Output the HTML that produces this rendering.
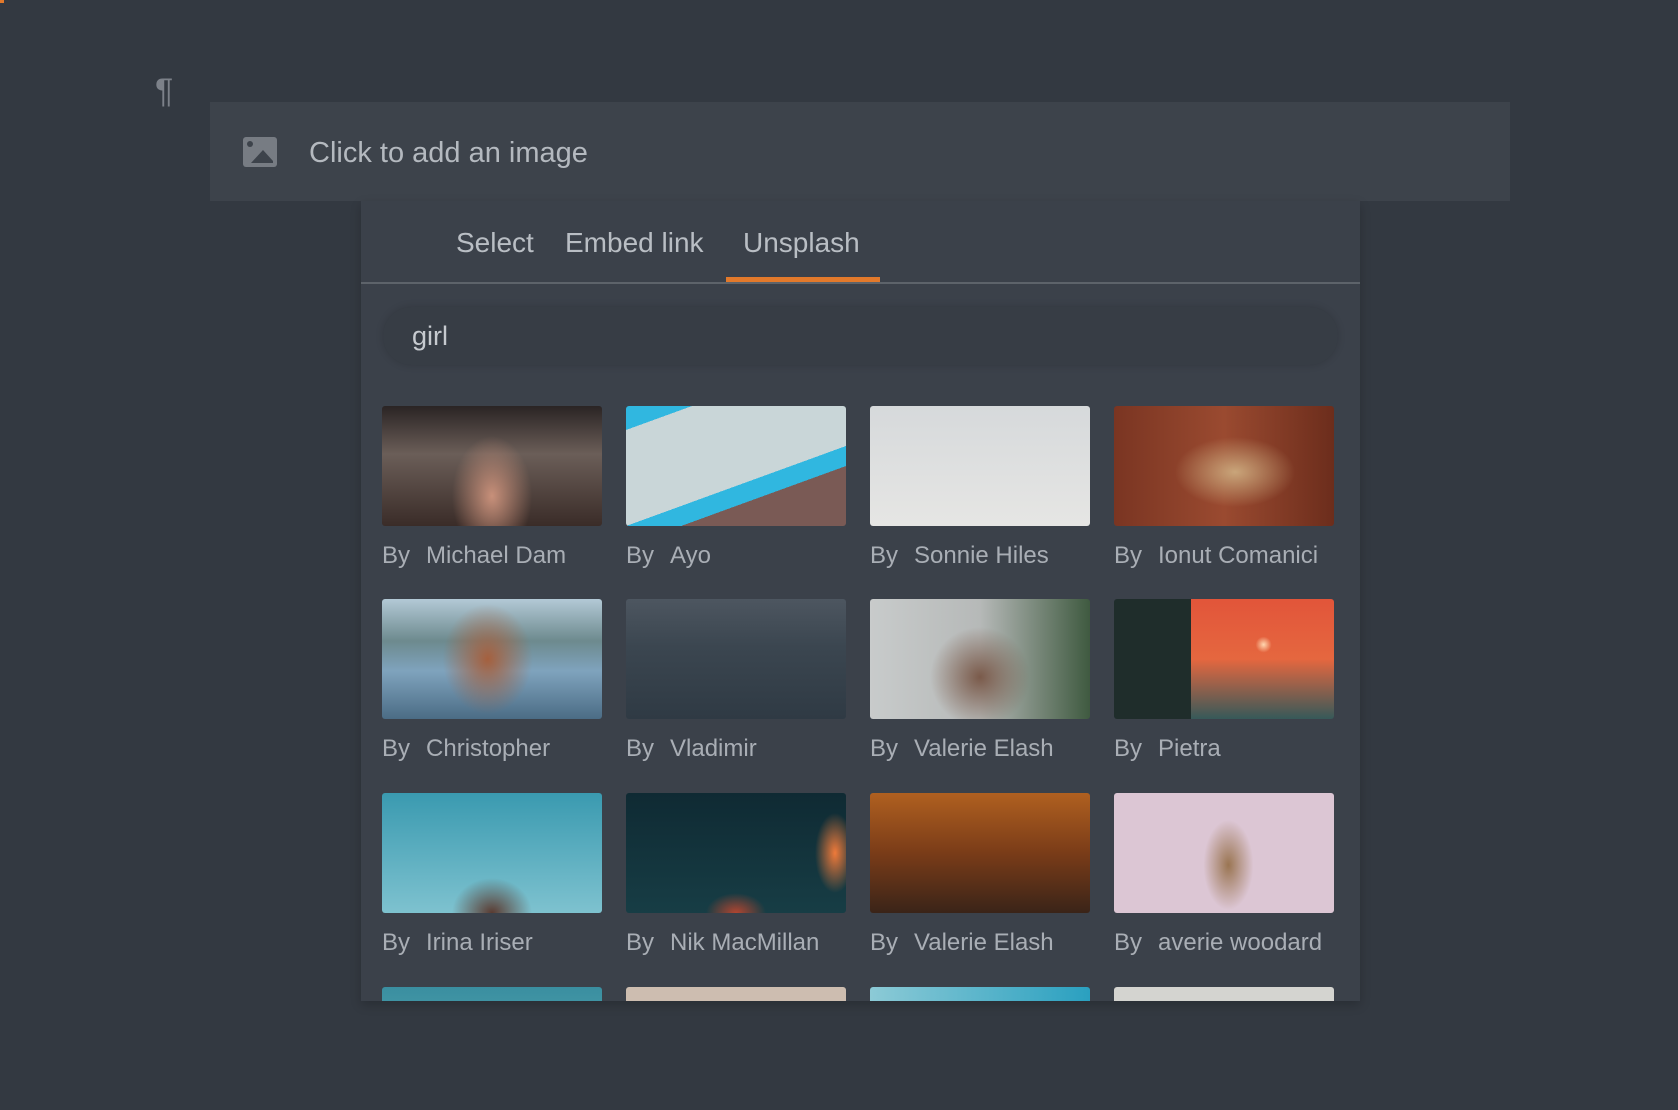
<!DOCTYPE html>
<html><head><meta charset="utf-8"><style>
*{margin:0;padding:0;box-sizing:border-box}
body{width:1678px;height:1110px;background:#333941;font-family:"Liberation Sans",sans-serif;position:relative;overflow:hidden;color:#c4c8cd}
.abs{position:absolute}
.bar{left:210px;top:102px;width:1300px;height:99px;background:#3d434b}
.panel{left:361px;top:201px;width:999px;height:800px;background:#3b414a;overflow:hidden;box-shadow:0 4px 10px rgba(0,0,0,.2)}
.tab{position:absolute;top:26px;font-size:28px;color:#b9bec4}
.search{position:absolute;left:22px;top:106px;width:955px;height:58px;border-radius:29px;background:#373d45;box-shadow:0 0 8px rgba(0,0,0,.15)}
.cell{position:absolute;width:220px}
.img{width:220px;height:120px;border-radius:3px}
.cap{margin-top:16px;font-size:24px;color:#a9aeb5;white-space:nowrap}
.cap span{margin-left:16px}
</style></head><body>
<div class="abs" style="left:0;top:0;width:4px;height:3px;background:#e2792b"></div>
<div class="abs" style="left:155px;top:72px;font-size:34px;color:#7c8189">¶</div>
<div class="abs bar">
 <svg class="abs" style="left:33px;top:35px" width="34" height="30" viewBox="0 0 34 30"><rect width="34" height="30" rx="3" fill="#777c83"/><circle cx="7" cy="7" r="3" fill="#3d434b"/><path d="M8 26 L20 13 L30 24 L30 26 Z" fill="#3d434b"/></svg>
 <div class="abs" style="left:99px;top:35px;font-size:29px;color:#b4b9bf">Click to add an image</div>
</div>
<div class="abs panel">
 <div class="tab" style="left:95px">Select</div>
 <div class="tab" style="left:204px">Embed link</div>
 <div class="tab" style="left:382px">Unsplash</div>
 <div class="abs" style="left:365px;top:76px;width:154px;height:5px;background:#e2792b"></div>
 <div class="abs" style="left:0;top:81px;width:999px;height:2px;background:#5d636a"></div>
 <div class="search"><div class="abs" style="left:29px;top:14px;font-size:27px;color:#c6cacf">girl</div></div>

 <div class="cell" style="left:21px;top:205px"><div class="img" style="background:radial-gradient(ellipse 40px 60px at 50% 75%,#c8907a,transparent),linear-gradient(#2a2424,#6b5e58 40%,#3a2c28)"></div><div class="cap">By<span>Michael Dam</span></div></div>
 <div class="cell" style="left:265px;top:205px"><div class="img" style="background:linear-gradient(160deg,#30b7e0 0 12%,#c9d6d8 12% 60%,#30b7e0 60% 70%,#7a5a55 70%)"></div><div class="cap">By<span>Ayo</span></div></div>
 <div class="cell" style="left:509px;top:205px"><div class="img" style="background:linear-gradient(#d6d9db,#e6e6e4)"></div><div class="cap">By<span>Sonnie Hiles</span></div></div>
 <div class="cell" style="left:753px;top:205px"><div class="img" style="background:radial-gradient(ellipse 60px 35px at 55% 55%,#c9a57a,transparent),linear-gradient(90deg,#7a3522,#9a4a30,#6c2d1c)"></div><div class="cap">By<span>Ionut Comanici</span></div></div>

 <div class="cell" style="left:21px;top:398px"><div class="img" style="background:radial-gradient(ellipse 45px 55px at 48% 50%,#a5603e,transparent),linear-gradient(#b3c9d6,#6d8a8e 35%,#7fa3bd 60%,#4b6c85)"></div><div class="cap">By<span>Christopher</span></div></div>
 <div class="cell" style="left:265px;top:398px"><div class="img" style="background:linear-gradient(#4d5660,#3b4650 40%,#2f3a44)"></div><div class="cap">By<span>Vladimir</span></div></div>
 <div class="cell" style="left:509px;top:398px"><div class="img" style="background:radial-gradient(ellipse 50px 50px at 50% 65%,#7a5a4a,transparent),linear-gradient(90deg,#c8cbcb,#b6b9b8 50%,#3f5a40)"></div><div class="cap">By<span>Valerie Elash</span></div></div>
 <div class="cell" style="left:753px;top:398px"><div class="img" style="background:radial-gradient(circle 8px at 68% 38%,#ffd7b0,transparent),linear-gradient(90deg,#1f2d2b 0 35%,transparent 35%),linear-gradient(#e2553a,#e5673f 50%,#365959)"></div><div class="cap">By<span>Pietra</span></div></div>

 <div class="cell" style="left:21px;top:592px"><div class="img" style="background:radial-gradient(ellipse 40px 35px at 50% 100%,#5a3a30,transparent),linear-gradient(#3a9ab0,#7ec2cf)"></div><div class="cap">By<span>Irina Iriser</span></div></div>
 <div class="cell" style="left:265px;top:592px"><div class="img" style="background:radial-gradient(ellipse 20px 40px at 95% 50%,#ef7a3a,transparent),radial-gradient(ellipse 30px 20px at 50% 100%,#b24530,transparent),linear-gradient(#0f2a33,#173d45)"></div><div class="cap">By<span>Nik MacMillan</span></div></div>
 <div class="cell" style="left:509px;top:592px"><div class="img" style="background:linear-gradient(#b06020,#7a3c18 50%,#3a2418)"></div><div class="cap">By<span>Valerie Elash</span></div></div>
 <div class="cell" style="left:753px;top:592px"><div class="img" style="background:radial-gradient(ellipse 25px 45px at 52% 60%,#9a7552,transparent),#dcc6d4"></div><div class="cap">By<span>averie woodard</span></div></div>

 <div class="cell" style="left:21px;top:786px"><div class="img" style="background:linear-gradient(#3a8ea0,#6bb)"></div></div>
 <div class="cell" style="left:265px;top:786px"><div class="img" style="background:#cdbdb0"></div></div>
 <div class="cell" style="left:509px;top:786px"><div class="img" style="background:linear-gradient(90deg,#8ccad6,#2aa0c0)"></div></div>
 <div class="cell" style="left:753px;top:786px"><div class="img" style="background:#d4d4d0"></div></div>
</div>
</body></html>
